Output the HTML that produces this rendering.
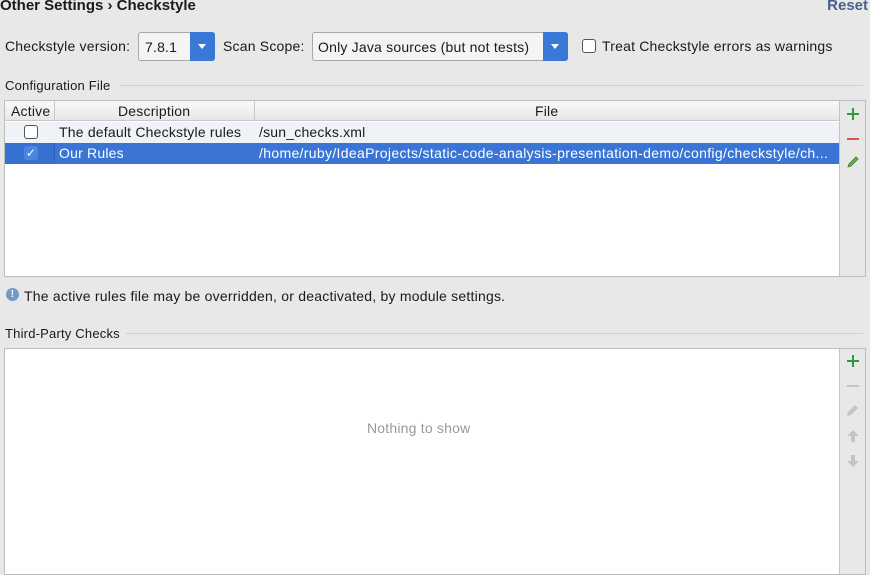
<!DOCTYPE html>
<html><head><meta charset="utf-8"><style>
*{box-sizing:border-box;margin:0;padding:0}
body{width:870px;height:575px;overflow:hidden;background:#e8e8e8;font-family:"Liberation Sans",sans-serif;font-size:14px;letter-spacing:0.2px;color:#1a1a1a;position:relative}
.a{position:absolute;white-space:nowrap}
.line{position:absolute;height:1px;background:#cfcfcf}
.box{position:absolute;border:1px solid #bdbdbd;background:#fff}
.tb{position:absolute;background:#e8e8e8;border-left:1px solid #c4c4c4}
.cb{position:absolute;width:14px;height:14px;border:1px solid #555;border-radius:3px;background:#fff}
.combo{position:absolute;border:1px solid #a8a8a8;border-radius:3px;background:#f4f4f4;height:29px}
.arr{position:absolute;right:-1px;top:-1px;width:25px;height:29px;background:#3a78d8;border-radius:0 3px 3px 0}
.arr:after{content:"";position:absolute;left:8px;top:12px;border-left:4px solid transparent;border-right:4px solid transparent;border-top:5px solid #fff}
</style></head><body>
<div class="a" style="left:0;top:-3px;font-weight:bold;font-size:15px;letter-spacing:0">Other Settings › Checkstyle</div>
<div class="a" style="right:2px;top:-3px;font-weight:bold;font-size:15px;letter-spacing:0;color:#4a5f8f">Reset</div>

<div class="a" style="left:5px;top:38px">Checkstyle version:</div>
<div class="combo" style="left:138px;top:32px;width:77px"><span class="a" style="left:6px;top:6px">7.8.1</span><div class="arr"></div></div>
<div class="a" style="left:223px;top:38px">Scan Scope:</div>
<div class="combo" style="left:312px;top:32px;width:256px"><span class="a" style="left:5px;top:6px">Only Java sources (but not tests)</span><div class="arr"></div></div>
<div class="cb" style="left:582px;top:39px"></div>
<div class="a" style="left:602px;top:38px">Treat Checkstyle errors as warnings</div>

<div class="a" style="left:5px;top:78px;font-size:13px">Configuration File</div>
<div class="line" style="left:120px;top:85px;width:743px"></div>

<div class="box" style="left:4px;top:100px;width:862px;height:177px">
 <div class="a" style="left:0;top:0;width:834px;height:20px;background:linear-gradient(#fafafa,#e6e6e6);border-bottom:1px solid #c8c8c8"></div>
 <div class="a" style="left:49px;top:0;width:1px;height:20px;background:#c8c8c8"></div>
 <div class="a" style="left:249px;top:0;width:1px;height:20px;background:#c8c8c8"></div>
 <div class="a" style="left:6px;top:2px">Active</div>
 <div class="a" style="left:113px;top:2px">Description</div>
 <div class="a" style="left:530px;top:2px">File</div>
 <div class="a" style="left:0;top:21px;width:834px;height:21px;background:#eff2f7"></div>
 <div class="cb" style="left:19px;top:24px"></div>
 <div class="a" style="left:54px;top:23px">The default Checkstyle rules</div>
 <div class="a" style="left:254px;top:23px">/sun_checks.xml</div>
 <div class="a" style="left:0;top:42px;width:834px;height:21px;background:#3a75d6"></div>
 <div class="a" style="left:0;top:42px;width:50px;height:21px;background:#3771cf;border-right:1px solid #2f62b8"></div>
 <div class="a" style="left:19px;top:45px;width:14px;height:14px;border-radius:3px;background:#4a86e0;color:#fff;font-size:12px;line-height:14px;text-align:center">✓</div>
 <div class="a" style="left:54px;top:44px;color:#fff">Our Rules</div>
 <div class="a" style="left:254px;top:44px;color:#fff;letter-spacing:0.33px">/home/ruby/IdeaProjects/static-code-analysis-presentation-demo/config/checkstyle/ch...</div>
 <div class="tb" style="left:834px;top:0;width:26px;height:175px">
  <div class="a" style="left:7px;top:12px;width:12px;height:2px;background:#2f9a3a"></div>
  <div class="a" style="left:12px;top:7px;width:2px;height:12px;background:#2f9a3a"></div>
  <div class="a" style="left:7px;top:37px;width:12px;height:2px;background:#d9534f"></div>
  <svg class="a" style="left:6px;top:54px" width="14" height="14"><path d="M2 12 L3 9 L10 2 L12 4 L5 11 Z" fill="#6ab04c" stroke="#3d7a2a" stroke-width="0.8"/></svg>
 </div>
</div>

<div class="a" style="left:6px;top:288px;width:13px;height:13px;border-radius:50%;background:#6f9bc7;color:#fff;font-size:10px;font-weight:bold;text-align:center;line-height:13px">!</div>
<div class="a" style="left:24px;top:288px;letter-spacing:0.22px">The active rules file may be overridden, or deactivated, by module settings.</div>

<div class="a" style="left:5px;top:326px;font-size:13px">Third-Party Checks</div>
<div class="line" style="left:126px;top:333px;width:737px"></div>

<div class="box" style="left:4px;top:348px;width:862px;height:227px">
 <div class="a" style="left:362px;top:71px;color:#999">Nothing to show</div>
 <div class="tb" style="left:834px;top:0;width:26px;height:225px">
  <div class="a" style="left:7px;top:11px;width:12px;height:2px;background:#2f9a3a"></div>
  <div class="a" style="left:12px;top:6px;width:2px;height:12px;background:#2f9a3a"></div>
  <div class="a" style="left:7px;top:36px;width:12px;height:2px;background:#c4c4c4"></div>
  <svg class="a" style="left:6px;top:54px" width="14" height="14"><path d="M1 13 L2 9 L9 2 L12 5 L5 12 Z" fill="#c4c4c4"/></svg>
  <svg class="a" style="left:6px;top:80px" width="14" height="14"><path d="M7 1 L13 7 L9 7 L9 13 L5 13 L5 7 L1 7 Z" fill="#c4c4c4"/></svg>
  <svg class="a" style="left:6px;top:105px" width="14" height="14"><path d="M7 13 L13 7 L9 7 L9 1 L5 1 L5 7 L1 7 Z" fill="#c4c4c4"/></svg>
 </div>
</div>
</body></html>
